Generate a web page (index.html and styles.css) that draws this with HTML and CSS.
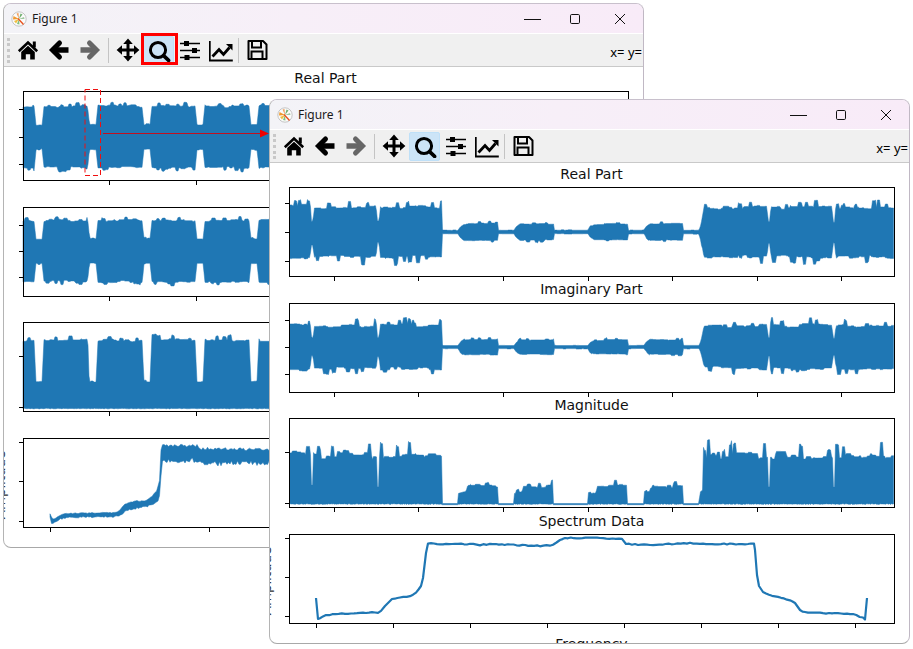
FILE: index.html
```html
<!DOCTYPE html>
<html lang="en">
<head>
<meta charset="utf-8">
<title>Figure 1</title>
<link rel="stylesheet" href="styles.css">
</head>
<body>
<svg class="defs" width="0" height="0" aria-hidden="true">
  <symbol id="i-logo" viewBox="0 0 16 16">
    <circle cx="8" cy="8" r="7.2" fill="#fbfbfb" stroke="#c4c4c4" stroke-width="1"/>
    <path d="M8 8 2.500 5 2 8.500Z" fill="#f09a30"/>
    <path d="M8 8 3 10 5 12.500Z" fill="#f0c040"/>
    <path d="M8 8 6 13 8.500 13.500Z" fill="#80c080"/>
    <path d="M8 8 9.500 2.500 11.500 3.500Z" fill="#70b070"/>
    <path d="M8 8 5.500 2.500 7.500 2Z" fill="#f0a060"/>
    <path d="M7.500 7 13 13 12 14 6.500 8Z" fill="#e8501c"/>
    <path d="M8 8 13 6 13.500 8Z" fill="#a0c8a0"/>
  </symbol>
  <symbol id="i-home" viewBox="0 0 24 24">
    <path d="M2.800 13.200 12 4.600l9.200 8.600" fill="none" stroke="#000" stroke-width="2.600"/>
    <path d="M16.800 3.400h3v6h-3z"/>
    <path d="M5.200 14 12 7.800l6.800 6.200v7.600h-4.600v-5.400H9.800v5.400H5.200z"/>
  </symbol>
  <symbol id="i-back" viewBox="0 0 24 24">
    <path d="M21.500 12H7" fill="none" stroke="currentColor" stroke-width="5.400"/>
    <path d="M12.500 5 5.500 12l7 7" fill="none" stroke="currentColor" stroke-width="5" stroke-linecap="round"/>
  </symbol>
  <symbol id="i-forward" viewBox="0 0 24 24">
    <path d="M2.500 12H17" fill="none" stroke="currentColor" stroke-width="5.400"/>
    <path d="M11.500 5l7 7-7 7" fill="none" stroke="currentColor" stroke-width="5" stroke-linecap="round"/>
  </symbol>
  <symbol id="i-move" viewBox="0 0 24 24">
    <path d="M4 12h16M12 4v16" stroke="#000" stroke-width="3" fill="none"/>
    <path d="M12 .4 16.800 6H7.200zM12 23.600 7.200 18h9.600zM.6 12 6 7.200v9.600zM23.400 12 18 16.800V7.200z"/>
  </symbol>
  <symbol id="i-zoom" viewBox="0 0 24 24">
    <circle cx="11" cy="12" r="7.600" fill="none" stroke="#000" stroke-width="3"/>
    <path d="M16.600 17.600 21.600 22.400" stroke="#000" stroke-width="3.600" stroke-linecap="round"/>
  </symbol>
  <symbol id="i-sliders" viewBox="0 0 24 24">
    <path d="M2 5.500h20M2 12.500h20M2 19.500h20" stroke="#000" stroke-width="1.600"/>
    <path d="M6 3h5v5H6zM14 10h5v5h-5zM6.500 17h5v5h-5z"/>
  </symbol>
  <symbol id="i-chart" viewBox="0 0 24 24">
    <path d="M.8 3v19.500h23" fill="none" stroke="#000" stroke-width="1.800"/>
    <path d="M3.500 18.500 10 11.500l4.500 5 6-7" fill="none" stroke="#000" stroke-width="2.800"/>
    <path d="M17 6h6.500v6.500z"/>
  </symbol>
  <symbol id="i-save" viewBox="0 0 24 24">
    <path d="M3.500 3h14.500l3.500 3.500v14.500h-18z" fill="none" stroke="#000" stroke-width="2" stroke-linejoin="round"/>
    <path d="M7 3v6.500h9V3M6.500 21v-7.500h11V21" fill="none" stroke="#000" stroke-width="2"/>
  </symbol>
</svg>

<main class="desktop">
  <section class="window window-back">
    <header class="titlebar">
      <svg class="app-icon"><use href="#i-logo"/></svg>
      <span class="title">Figure 1</span>
      <span class="controls">
        <span class="ctl ctl-min"><svg width="18" height="12" viewBox="0 0 18 12"><path d="M0 6.500h17" stroke="#111"/></svg></span>
        <span class="ctl ctl-max"><svg width="12" height="12" viewBox="0 0 12 12"><rect x="1.500" y="1.500" width="9" height="9" rx="1.200" fill="none" stroke="#111"/></svg></span>
        <span class="ctl ctl-close"><svg width="12" height="12" viewBox="0 0 12 12"><path d="M1 1l10 10M11 1 1 11" stroke="#111"/></svg></span>
      </span>
    </header>
    <nav class="toolbar">
      <span class="gripper"></span>
      <span class="tool"><svg><use href="#i-home"/></svg></span>
      <span class="tool"><svg><use href="#i-back"/></svg></span>
      <span class="tool tool-off"><svg><use href="#i-forward"/></svg></span>
      <span class="sep"></span>
      <span class="tool"><svg><use href="#i-move"/></svg></span>
      <span class="tool tool-on tool-marked"><svg><use href="#i-zoom"/></svg></span>
      <span class="tool"><svg><use href="#i-sliders"/></svg></span>
      <span class="tool"><svg><use href="#i-chart"/></svg></span>
      <span class="sep sep-narrow"></span>
      <span class="tool"><svg><use href="#i-save"/></svg></span>
      <span class="coords">x= y=</span>
    </nav>
    <svg class="canvas" viewBox="4 67 639 480">
      <text class="plot-title" x="325.500" y="83">Real Part</text>
      <text class="plot-title" x="325.500" y="198">Imaginary Part</text>
      <text class="plot-title" x="325.500" y="314">Magnitude</text>
      <text class="plot-title" x="325.500" y="430">Spectrum Data</text>
      <text class="plot-ylabel" transform="translate(4.800 485) rotate(-90)">Amplitude</text>

      <path class="wave" id="b-real"/>
      <path class="wave" id="b-imag"/>
      <path class="wave" id="b-mag"/>
      <path class="wave" id="b-spec"/>

      <rect class="axes" x="23.500" y="91.500" width="605" height="89"/>
      <rect class="axes" x="23.500" y="207.500" width="605" height="89"/>
      <rect class="axes" x="23.500" y="322.500" width="605" height="89"/>
      <rect class="axes" x="23.500" y="438.500" width="605" height="89"/>
      <path class="ticks" d="M19 109.500h4M19 137.500h4M19 164.500h4M109.500 181v4M196.500 181v4"/>
      <path class="ticks" d="M19 225.500h4M19 251.500h4M19 277.500h4M109.500 297v4M196.500 297v4"/>
      <path class="ticks" d="M19 356.500h4M19 407.500h4M109.500 412v4M196.500 412v4"/>
      <path class="ticks" d="M19 442.500h4M19 481.500h4M19 521.500h4M50.500 528v4M130.500 528v4M209.500 528v4"/>

      <rect class="mark-box" x="85" y="89.500" width="15.500" height="86"/>
      <path class="mark-arrow" d="M103 133.500h160"/>
      <path class="mark-head" d="M260 129.500 269 133.500 260 137.500z"/>
    </svg>
  </section>

  <section class="window window-front">
    <header class="titlebar">
      <svg class="app-icon"><use href="#i-logo"/></svg>
      <span class="title">Figure 1</span>
      <span class="controls">
        <span class="ctl ctl-min"><svg width="18" height="12" viewBox="0 0 18 12"><path d="M0 6.500h17" stroke="#111"/></svg></span>
        <span class="ctl ctl-max"><svg width="12" height="12" viewBox="0 0 12 12"><rect x="1.500" y="1.500" width="9" height="9" rx="1.200" fill="none" stroke="#111"/></svg></span>
        <span class="ctl ctl-close"><svg width="12" height="12" viewBox="0 0 12 12"><path d="M1 1l10 10M11 1 1 11" stroke="#111"/></svg></span>
      </span>
    </header>
    <nav class="toolbar">
      <span class="gripper"></span>
      <span class="tool"><svg><use href="#i-home"/></svg></span>
      <span class="tool"><svg><use href="#i-back"/></svg></span>
      <span class="tool tool-off"><svg><use href="#i-forward"/></svg></span>
      <span class="sep"></span>
      <span class="tool"><svg><use href="#i-move"/></svg></span>
      <span class="tool tool-on"><svg><use href="#i-zoom"/></svg></span>
      <span class="tool"><svg><use href="#i-sliders"/></svg></span>
      <span class="tool"><svg><use href="#i-chart"/></svg></span>
      <span class="sep sep-narrow"></span>
      <span class="tool"><svg><use href="#i-save"/></svg></span>
      <span class="coords">x= y=</span>
    </nav>
    <svg class="canvas" viewBox="270 163 639 480">
      <text class="plot-title" x="591.500" y="179">Real Part</text>
      <text class="plot-title" x="591.500" y="294">Imaginary Part</text>
      <text class="plot-title" x="591.500" y="410">Magnitude</text>
      <text class="plot-title" x="591.500" y="526">Spectrum Data</text>
      <text class="plot-title" x="591.500" y="649">Frequency</text>
      <text class="plot-ylabel" transform="translate(270.800 581) rotate(-90)">Amplitude</text>

      <path class="wave" id="f-real"/>
      <path class="wave" id="f-imag"/>
      <path class="wave" id="f-mag"/>
      <path class="line" id="f-spec"/>

      <rect class="axes" x="289.500" y="187.500" width="605" height="89"/>
      <rect class="axes" x="289.500" y="303.500" width="605" height="89"/>
      <rect class="axes" x="289.500" y="418.500" width="605" height="89"/>
      <rect class="axes" x="289.500" y="534.500" width="605" height="89"/>
      <path class="ticks" d="M285 203.500h4M285 232.500h4M285 261.500h4M334.500 277v4M418.500 277v4M503.500 277v4M588.500 277v4M672.500 277v4M757.500 277v4M841.500 277v4"/>
      <path class="ticks" d="M285 320.500h4M285 347.500h4M285 374.500h4M334.500 393v4M418.500 393v4M503.500 393v4M588.500 393v4M672.500 393v4M757.500 393v4M841.500 393v4"/>
      <path class="ticks" d="M285 452.500h4M285 503.500h4M334.500 508v4M418.500 508v4M503.500 508v4M588.500 508v4M672.500 508v4M757.500 508v4M841.500 508v4"/>
      <path class="ticks" d="M285 538.500h4M285 577.500h4M285 616.500h4M316.500 624v4M393.500 624v4M470.500 624v4M547.500 624v4M624.500 624v4M701.500 624v4M778.500 624v4M855.500 624v4"/>
    </svg>
  </section>
</main>
<script src="plots.js"></script>
</body>
</html>
```
FILE: styles.css
```css
html, body {
  margin: 0;
  padding: 0;
  background: #fff;
}

.defs {
  position: absolute;
}

.desktop {
  position: relative;
  width: 913px;
  height: 649px;
  overflow: hidden;
}

.window {
  position: absolute;
  width: 641px;
  height: 545px;
  box-sizing: border-box;
  display: flex;
  flex-direction: column;
  background: #fff;
  border: 1px solid #b4b4b4;
  border-top-color: #c8c0cc;
  border-right-color: #c0b8c4;
  border-bottom-color: #a8a8a8;
  border-radius: 8px;
  overflow: hidden;
}

.window-back {
  left: 3px;
  top: 3px;
}

.window-front {
  left: 269px;
  top: 99px;
}

.titlebar {
  flex: none;
  height: 29px;
  display: flex;
  align-items: center;
  padding-left: 7px;
  background: linear-gradient(90deg, #f3f3f7 0%, #f7eff8 45%, #f8ebf8 100%);
  border-bottom: 1px solid #fff;
}

.app-icon {
  width: 16px;
  height: 16px;
  margin-right: 5px;
}

.title {
  font: 12px "Noto Sans", "Open Sans", sans-serif;
  color: #1a1a1a;
}

.controls {
  margin-left: auto;
  display: flex;
  align-items: center;
}

.ctl {
  display: flex;
  justify-content: center;
  align-items: center;
  height: 29px;
}

.ctl-min { width: 41px; }
.ctl-max { width: 44px; }
.ctl-close { width: 46px; }

.toolbar {
  flex: none;
  height: 32px;
  display: flex;
  align-items: center;
  background: #f0f0f0;
  border-bottom: 1px solid #c9c9c9;
  padding-left: 3px;
}

.gripper {
  width: 0;
  height: 25px;
  margin-right: 2px;
  border-left: 3px dotted #c8c8c8;
}

.tool {
  position: relative;
  flex: none;
  width: 31px;
  height: 29px;
  display: flex;
  align-items: center;
  justify-content: center;
  box-sizing: border-box;
  color: #000;
}

.tool svg {
  width: 24px;
  height: 24px;
}

.tool-off {
  color: #666;
}

.tool-on {
  background: #cce4f7;
  border: 1px solid #bfe0f8;
  border-radius: 2px;
}

.tool-marked::after {
  content: "";
  position: absolute;
  left: -3px;
  right: -5px;
  top: -4px;
  bottom: -1px;
  border: 3px solid #f00;
}

.sep {
  flex: none;
  width: 1px;
  height: 25px;
  margin: 0 3px;
  background: #c4c4c4;
}

.sep-narrow {
  margin: 0 2px;
}

.coords {
  margin-left: auto;
  margin-top: 3px;
  padding-right: 1px;
  font: 13px "Noto Sans", "Liberation Sans", sans-serif;
  color: #000;
}

.canvas {
  flex: none;
  display: block;
  width: 639px;
  height: 480px;
}

.plot-title {
  font: 14px "DejaVu Sans", sans-serif;
  fill: #111;
  text-anchor: middle;
}

.plot-ylabel {
  font: 13.33px "DejaVu Sans", sans-serif;
  fill: #333;
  text-anchor: middle;
}

.wave {
  fill: #1f77b4;
  stroke: #1f77b4;
  stroke-width: 0.5;
  stroke-linejoin: round;
}

.line {
  fill: none;
  stroke: #1f77b4;
  stroke-width: 2.2;
  stroke-linejoin: round;
}

.axes {
  fill: none;
  stroke: #000;
  stroke-width: 1;
}

.ticks {
  fill: none;
  stroke: #000;
  stroke-width: 1;
}

.mark-box {
  fill: none;
  stroke: #f01010;
  stroke-width: 1;
  stroke-dasharray: 5 3;
}

.mark-arrow {
  fill: none;
  stroke: #c01020;
  stroke-width: 1;
}

.mark-head {
  fill: #ee0000;
}
```
FILE: plots.js
```js
(function () {
  var seed = 4711;
  function rnd() {
    seed = (seed * 1664525 + 1013904223) % 4294967296;
    return seed / 4294967296;
  }

  function lerp(points, x, idx) {
    for (var i = 1; i < points.length; i++) {
      if (x <= points[i][0]) {
        var a = points[i - 1], b = points[i];
        var t = b[0] === a[0] ? 1 : (x - a[0]) / (b[0] - a[0]);
        return a[idx] + (b[idx] - a[idx]) * t;
      }
    }
    return points[points.length - 1][idx];
  }

  function toPath(top, bottom) {
    var d = "M" + top.map(function (p) { return p[0].toFixed(1) + " " + p[1].toFixed(1); }).join("L");
    d += "L" + bottom.reverse().map(function (p) { return p[0].toFixed(1) + " " + p[1].toFixed(1); }).join("L");
    return d + "Z";
  }

  /* rough skyline: slow drift, short plateaus and two pixel spikes, as a
     fraction of the local amplitude */
  function skyline(length, o) {
    var out = [], slow = 0, slowLeft = 0, mid = 0, midLeft = 0, spikeLeft = 0, spike = 0;
    for (var i = 0; i < length; i++) {
      if (slowLeft-- <= 0) { slow = (rnd() * 2 - 1) * o.slow; slowLeft = 6 + rnd() * 10; }
      if (midLeft-- <= 0) { mid = rnd() * o.mid; midLeft = 1 + rnd() * 3; }
      if (spikeLeft-- <= 0) {
        spike = rnd() < o.rate ? o.spike * (0.35 + 0.65 * rnd()) : 0;
        spikeLeft = spike ? 1 + rnd() * 1.5 : 0;
      }
      out.push(slow + mid + spike);
    }
    return out;
  }

  /* symmetric burst signal around a centre line */
  function wave(points, c, scale, o) {
    var x0 = points[0][0], x1 = points[points.length - 1][0];
    var n = Math.floor(x1 - x0) + 1;
    var up = skyline(n, o), down = skyline(n, o);
    var top = [], bottom = [];
    for (var i = 0; i < n; i++) {
      var x = x0 + i, a = lerp(points, x, 1) * scale;
      top.push([x, c - a * (1 + up[i])]);
      bottom.push([x, c + a * (1 + down[i])]);
    }
    return toPath(top, bottom);
  }

  /* one sided magnitude signal standing on a base line */
  function mag(points, base, o) {
    var x0 = points[0][0], x1 = points[points.length - 1][0];
    var n = Math.floor(x1 - x0) + 1;
    var up = skyline(n, o);
    var top = [], bottom = [];
    for (var i = 0; i < n; i++) {
      var x = x0 + i, h = lerp(points, x, 1);
      top.push([x, base - h * (1 + up[i])]);
      bottom.push([x, base + (h < 1 ? 1.2 : 0.2 + rnd() * 0.7)]);
    }
    return toPath(top, bottom);
  }

  /* band between two curves; jitter grows with the thickness of the band */
  function band(points, jitter) {
    var x0 = points[0][0], x1 = points[points.length - 1][0];
    var top = [], bottom = [];
    for (var x = x0; x <= x1; x += 1.5) {
      var t = lerp(points, x, 1), b = lerp(points, x, 2), k = jitter * (b - t) / 10;
      top.push([x, t - rnd() * k]);
      bottom.push([x, b + rnd() * k * 1.8]);
    }
    return toPath(top, bottom);
  }

  /* a single noisy line through the points */
  function line(points, jitter) {
    var d = [];
    points.forEach(function (p, i) {
      if (i === 0) { d.push(p); return; }
      var prev = points[i - 1];
      var steps = Math.max(1, Math.round((p[0] - prev[0]) / 3));
      for (var s = 1; s <= steps; s++) {
        var t = s / steps;
        var flat = Math.abs(p[1] - prev[1]) / (p[0] - prev[0]) < 0.6;
        d.push([prev[0] + (p[0] - prev[0]) * t,
          prev[1] + (p[1] - prev[1]) * t + (flat ? (rnd() - 0.5) * jitter : 0)]);
      }
    });
    return "M" + d.map(function (p) { return p[0].toFixed(1) + " " + p[1].toFixed(1); }).join("L");
  }

  var gapsBack = [[35, 43], [88.5, 97], [143, 151], [196, 204], [250, 258]];
  function backEnvelope(hi, lo, ramp) {
    var p = [[23, hi]];
    gapsBack.forEach(function (g) {
      p.push([g[0] - ramp, hi], [g[0] + ramp, lo], [g[1] - ramp, lo], [g[1] + ramp, hi]);
    });
    p.push([270, hi]);
    return p;
  }

  var frontWave = [[289.5,25],[310,25],[311.5,10],[313,10],[314.5,24],[376,24],[377.5,10],[379,10],[380.5,24],
    [441.5,24],[442,1.7],[458,1.7],[460,5],[464,8],[497.5,8.5],[498,1.7],[514,1.7],[516,5],[520,8],[553.5,8],
    [554,1.7],[588,1.7],[590,5],[594,7.5],[627.5,8],[628,1.7],[644,1.7],[646,5],[650,8],[683,8],[683.5,1.7],
    [699,1.7],[701,7],[704,23],[767,24],[768,10],[769.5,10],[771,24],[832,24],[833,10],[834.5,10],[836,24],[894,24]];

  var frontMag = [[289.5,47],[310.5,47],[311,17],[313,17],[313.5,47],[377,47],[377.5,17],[379,17],[379.5,47],
    [441.5,47],[442,0],[458,0],[458.5,10],[466,12],[467.5,17],[497.5,17],[498,0],[514,0],[514.5,10],[522,12],
    [523.5,17],[553,17],[553.5,0],[588,0],[588.5,9],[596,11],[597.5,17],[627,17],[627.5,0],[644,0],[644.5,10],
    [652,12],[653.5,17],[683,17],[683.5,0],[699,0],[700,11],[702.5,13],[703.5,47],[767.5,47],[768,17],[770,17],
    [770.5,47],[832.5,47],[833,17],[835,17],[835.5,47],[894,47]];

  var frontSpec = [[316,598],[318,619],[320,618],[326,615],[345,613.5],[378,612.5],
    [381,611],[385,606],[392,599],[400,597.5],[410,596],[416,593],[421,586],[423,578],
    [426,553],[428,543.5],[440,544],[470,544],[480,545],[490,544],[540,546],[553,545],
    [560,540],[565,538],[600,538],[622,539],[626,544],[650,545],[690,543],[700,544],
    [754,544],[755,550],[757,575],[759,586],[763,592],[772,596],[790,600],[795,603],
    [800,610],[805,612.5],[820,613],[853,614],[863,618],[865,619],[867,598]];

  var backSpec = [[50,514,516],[50.5,514,523],[52,520,523],[56,518,521],[60,515.5,518.5],[65,514,517],[80,513.5,516.5],
    [115,513,516],[118,512,515.5],[125,505,510],[130,502.5,508],[145,501,506],[152,498,504],[157,491,499],[160,480,492],
    [160.5,455,480],[161.5,447,458],[198,447,458],[199,450,461],[269,451,461]];

  var backOpts = { slow: 0.03, mid: 0.05, spike: 0.12, rate: 0.08 };
  var backMagOpts = { slow: 0.015, mid: 0.025, spike: 0.1, rate: 0.08 };
  var frontOpts = { slow: 0.07, mid: 0.06, spike: 0.32, rate: 0.06 };
  var frontMagOpts = { slow: 0.07, mid: 0.07, spike: 0.32, rate: 0.08 };

  var data = {
    "b-real": wave(backEnvelope(30, 12, 1), 137, 1, backOpts),
    "b-imag": wave(backEnvelope(30, 12, 1), 251, 1, backOpts),
    "b-mag": mag(backEnvelope(67, 26, 0.7), 408, backMagOpts),
    "b-spec": band(backSpec, 2.6),
    "f-real": wave(frontWave, 232, 1, frontOpts),
    "f-imag": wave(frontWave, 347, 0.88, frontOpts),
    "f-mag": mag(frontMag, 503.5, frontMagOpts),
    "f-spec": line(frontSpec, 1)
  };

  Object.keys(data).forEach(function (id) {
    document.getElementById(id).setAttribute("d", data[id]);
  });
})();
```
